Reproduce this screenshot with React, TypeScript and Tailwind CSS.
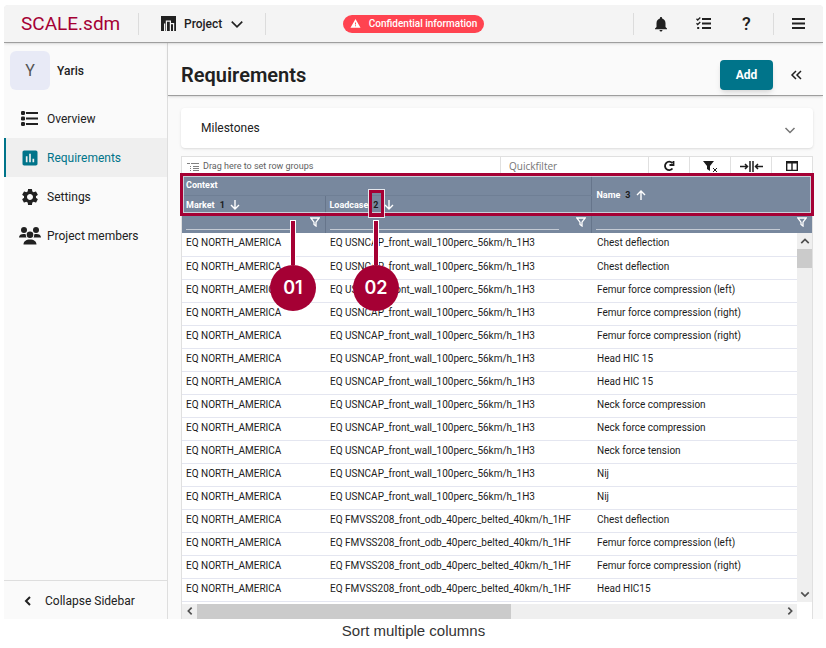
import type { ReactNode } from "react";
import { MdInsertChart, MdNotifications, MdSettings, MdWarning } from "react-icons/md";

const rows: [string, string, string][] = [
  ...[
    "Chest deflection",
    "Chest deflection",
    "Femur force compression (left)",
    "Femur force compression (right)",
    "Femur force compression (right)",
    "Head HIC 15",
    "Head HIC 15",
    "Neck force compression",
    "Neck force compression",
    "Neck force tension",
    "Nij",
    "Nij",
  ].map((n): [string, string, string] => ["EQ NORTH_AMERICA", "EQ USNCAP_front_wall_100perc_56km/h_1H3", n]),
  ...[
    "Chest deflection",
    "Femur force compression (left)",
    "Femur force compression (right)",
    "Head HIC15",
  ].map((n): [string, string, string] => ["EQ NORTH_AMERICA", "EQ FMVSS208_front_odb_40perc_belted_40km/h_1HF", n]),
];

function Stroke({ d, box = 12, className = "", width = 2 }: { d: string; box?: number; className?: string; width?: number }) {
  return (
    <svg viewBox={`0 0 ${box} ${box}`} className={className} fill="none" stroke="currentColor" strokeWidth={width} aria-hidden="true">
      <path d={d} />
    </svg>
  );
}

const ChevronLeft = ({ className }: { className: string }) => <Stroke className={className} d="M8 2 4 6l4 4" />;
const ChevronRight = ({ className }: { className: string }) => <Stroke className={className} d="m4 2 4 4-4 4" />;
const ChevronDown = ({ className, width }: { className: string; width?: number }) => (
  <Stroke className={className} width={width} d="m1.500 4 4.500 4.500L10.500 4" />
);
const ChevronUp = ({ className }: { className: string }) => <Stroke className={className} d="M1.500 8.500 6 4l4.500 4.500" />;

function ProjectIcon() {
  return (
    <svg viewBox="0 0 15 15" className="size-[15px]" aria-hidden="true">
      <path fill="currentColor" d="M0 0h15v15H0z" />
      <path fill="none" stroke="#f4f4f4" strokeWidth="1.200" d="M3.600 15V7.600M5.400 15V5.200h4V15M9.400 7.600h3.200V15" />
    </svg>
  );
}

function ListIcon() {
  return (
    <svg viewBox="0 0 17 15" className="h-[15px] w-[17px]" fill="currentColor" aria-hidden="true">
      <rect width="4" height="4" rx="1.200" />
      <rect y="5.500" width="4" height="4" rx="1.200" />
      <rect y="11" width="4" height="4" rx="1.200" />
      <path d="M5 1h12v2H5zM5 6.500h12v2H5zM5 12h12v2H5z" />
    </svg>
  );
}

function MembersIcon() {
  return (
    <svg viewBox="0 0 22 18" className="h-[18px] w-[22px]" fill="currentColor" aria-hidden="true">
      <circle cx="5" cy="3" r="3" />
      <circle cx="17" cy="3" r="3" />
      <circle cx="11" cy="7.800" r="3.300" />
      <path d="M0 10.500C0 8 2 7 4.500 7c.9 0 1.700.1 2.400.4-.2 1.200 0 2.200.6 3.100zM22 10.500C22 8 20 7 17.500 7c-.9 0-1.700.1-2.400.4.2 1.200 0 2.200-.6 3.100zM4.500 17.500c0-3 2.500-5 6.500-5s6.500 2 6.500 5z" />
    </svg>
  );
}

function ChecklistIcon() {
  return (
    <svg viewBox="0 0 15 13" className="h-[13px] w-[15px]" fill="none" stroke="currentColor" aria-hidden="true">
      <path strokeWidth="2" d="M6 2h9M6 6.500h9M6 11h9" />
      <path strokeWidth="1.300" d="m.5 1.800 1.200 1.200L4.300.5M.5 6.300l1.200 1.200L4.300 5" />
      <path strokeWidth="2" d="M1.200 11h2" />
    </svg>
  );
}

function Funnel() {
  return <Stroke className="size-[10px] shrink-0" box={10} width={1.3} d="M.8 1h8.400L6 5.200V9L4 7.500V5.200z" />;
}

function SortArrow({ up = false }: { up?: boolean }) {
  return <Stroke className="size-[10px]" box={10} width={1.4} d={up ? "M5 10V1M1 5l4-4 4 4" : "M5 0v9M1 5l4 4 4-4"} />;
}

function NavItem({ icon, label, active = false }: { icon: ReactNode; label: string; active?: boolean }) {
  return (
    <a
      href="#"
      aria-current={active ? "page" : undefined}
      className={`flex h-[39px] items-center gap-[5px] border-l-2 pl-[11px] text-xs ${active ? "border-[#00748a] bg-[#efefef] text-[#00748a]" : "border-transparent"}`}
    >
      <span className="flex w-[25px] justify-center">{icon}</span>
      {label}
    </a>
  );
}

function ToolButton({ label, children }: { label: string; children: ReactNode }) {
  return (
    <button aria-label={label} className="flex h-full w-[41px] items-center justify-center border-l border-[#e0e0e0] pt-[2px]">
      {children}
    </button>
  );
}

function SortHead({ label, order, up }: { label: string; order: number; up?: boolean }) {
  return (
    <span className="flex items-center gap-[5px]">
      {label}
      <span className="text-[#1c1c1c]">{order}</span>
      <SortArrow up={up} />
    </span>
  );
}

function FilterCell({ label }: { label: string }) {
  return (
    <div className="flex h-[17px] items-start pr-[5px]">
      <input aria-label={label} className="mr-[17px] h-[14px] min-w-0 flex-1 border-b border-[#c3cad4] bg-transparent outline-none" />
      <span className="pt-px"><Funnel /></span>
    </div>
  );
}

function Callout({ text, className }: { text: string; className: string }) {
  return (
    <div className={`absolute top-[47px] flex w-[46px] flex-col items-center ${className}`}>
      <span className="h-[45px] w-[6px] border border-b-0 border-white bg-[#a50034]" />
      <span className="flex size-[46px] items-center justify-center rounded-full bg-[#a50034] font-[Inter,sans-serif] text-lg font-semibold text-white">
        {text}
      </span>
    </div>
  );
}

function Grid() {
  return (
    <div className="relative">
      <table className="w-full table-fixed border-collapse text-left text-[#1c1c1c]">
        <colgroup>
          <col className="w-[143px]" />
          <col className="w-[266px]" />
          <col />
        </colgroup>
        <thead className="bg-[#78889e] text-[9px] leading-3 text-white">
          <tr className="h-[22px]">
            <th colSpan={2} className="border-b border-[#6f7f95] pt-[2px] pl-1 font-bold">Context</th>
            <th rowSpan={2} className="border-l border-[#66758b] pl-[5px] font-bold">
              <SortHead label="Name" order={3} up />
            </th>
          </tr>
          <tr className="h-[21px]">
            <th className="pb-[2px] pl-1 font-bold"><SortHead label="Market" order={1} /></th>
            <th className="border-l border-[#66758b] pb-[2px] pl-1 font-bold"><SortHead label="Loadcase" order={2} /></th>
          </tr>
          <tr className="h-[17px]">
            <td className="pl-1"><FilterCell label="Filter market" /></td>
            <td className="border-l border-[#66758b] pl-1"><FilterCell label="Filter loadcase" /></td>
            <td className="border-l border-[#66758b] pl-1"><FilterCell label="Filter name" /></td>
          </tr>
        </thead>
        <tbody className="bg-white text-[10px] leading-4">
          {rows.map((r, i) => (
            <tr key={i} className="h-[23px] border-b border-[#e4e6f0]">
              {r.map((c, j) => (
                <td key={j} className={`pb-[2px] whitespace-nowrap ${j === 0 ? "pl-1" : j === 1 ? "pl-[5px]" : "pl-[6px]"}`}>{c}</td>
              ))}
            </tr>
          ))}
        </tbody>
      </table>
      <div className="absolute top-[60px] right-0 bottom-0 flex w-[15px] flex-col items-center bg-[#efefef] text-[#505050]">
        <button aria-label="Scroll up" className="flex h-4 items-center"><ChevronUp className="size-[10px]" /></button>
        <span className="h-[19px] w-full bg-[#cbcbcb]" />
        <button aria-label="Scroll down" className="mt-auto flex h-4 items-center"><ChevronDown className="size-[10px]" /></button>
      </div>
      <div className="absolute -inset-x-[2px] top-0 h-[43px] border-[3px] border-[#a50034] ring-1 ring-white/60 ring-inset" />
      <div className="absolute top-[17px] left-[187px] h-[27px] w-[15px] border-[3px] border-[#a50034] outline outline-white/80" />
      <Callout text="01" className="left-[88px]" />
      <Callout text="02" className="left-[171px]" />
    </div>
  );
}

export default function App() {
  return (
    <figure className="bg-white pt-[5px] pr-[3px] pl-1 font-[Roboto,'Liberation_Sans',sans-serif] text-[#212121]">
      <div className="overflow-hidden rounded-t bg-[#fafafa]">
        <header className="relative z-10 grid h-[38px] grid-cols-[1fr_auto_1fr] items-center border-b border-[#9e9e9e] bg-[#f4f4f4] shadow">
          <div className="flex items-center">
            <span className="w-[134px] pl-[17px] text-[19px] leading-6 text-[#a50034]">SCALE.sdm</span>
            <button className="flex h-[22px] w-[128px] items-center gap-2 border-x border-[#dcdcdc] pl-[22px] text-xs font-medium">
              <ProjectIcon />
              Project
              <ChevronDown className="size-[14px]" width={1.4} />
            </button>
          </div>
          <span className="flex h-[18px] items-center gap-2 rounded-full bg-[#ff4350] px-[7px] text-[10px] font-medium text-white">
            <MdWarning className="size-[11px]" />
            Confidential information
          </span>
          <div className="flex items-center justify-end">
            <span className="flex h-[22px] items-center border-x border-[#dcdcdc] px-[5px]">
              <button aria-label="Notifications" className="flex w-[43px] justify-center"><MdNotifications className="size-[18px]" /></button>
              <button aria-label="Tasks" className="flex w-[43px] justify-center"><ChecklistIcon /></button>
              <button aria-label="Help" className="w-[43px] text-lg leading-5 font-medium">?</button>
            </span>
            <button aria-label="Menu" className="flex w-[49px] justify-center">
              <Stroke className="size-[13px]" box={13} d="M0 2h13M0 6.500h13M0 11h13" />
            </button>
          </div>
        </header>

        <div className="flex">
          <aside className="flex w-[164px] shrink-0 flex-col border-r border-[#dedede]">
            <div className="flex items-center gap-[7px] px-[6px] pt-2 pb-[9px] text-xs font-medium">
              <span className="flex h-[39px] w-10 items-center justify-center rounded-md bg-[#e8eaf6] text-base font-normal text-[#555]">Y</span>
              Yaris
            </div>
            <nav>
              <NavItem icon={<ListIcon />} label="Overview" />
              <NavItem icon={<MdInsertChart className="size-5" />} label="Requirements" active />
              <NavItem icon={<MdSettings className="size-5" />} label="Settings" />
              <NavItem icon={<MembersIcon />} label="Project members" />
            </nav>
            <button className="mt-auto flex h-[39px] items-center gap-[11px] border-t border-[#dedede] pt-[3px] pl-[18px] text-xs">
              <ChevronLeft className="size-3" />
              Collapse Sidebar
            </button>
          </aside>

          <main className="min-w-0 flex-1">
            <div className="flex h-[53px] items-center border-b border-[#9e9e9e] pt-3 pr-[21px] pl-[13px] shadow-sm">
              <h1 className="flex-1 text-xl font-semibold">Requirements</h1>
              <button className="h-[30px] w-[53px] rounded bg-[#00748a] text-xs font-bold text-white shadow-md">Add</button>
              <button aria-label="Collapse panel" className="ml-[17px]">
                <Stroke className="size-3" width={1.5} d="M6 2 2 6l4 4M11 2 7 6l4 4" />
              </button>
            </div>
            <div className="pt-3 pr-[10px] pl-[13px]">
              <button className="flex h-10 w-full items-center justify-between rounded bg-white pr-[17px] pl-5 text-xs shadow">
                Milestones
                <span className="pt-1 text-[#757575]"><ChevronDown className="size-3" width={1.5} /></span>
              </button>
              <div className="mt-2 border border-b-0 border-[#e0e0e0] bg-white">
                <div className="flex h-4 items-center text-[9px] text-[#616161]">
                  <span className="flex flex-1 items-center gap-1 pt-[3px] pl-[5px]">
                    <svg viewBox="0 0 12 10" className="h-[10px] w-3" fill="none" stroke="currentColor" strokeWidth=".8" aria-hidden="true">
                      <path d="M0 1.500h3M4 1.500h8M3 4.500h1M6 4.500h6M3 6.500h1M6 6.500h6M3 8.500h1M6 8.500h6" />
                    </svg>
                    Drag here to set row groups
                  </span>
                  <input
                    aria-label="Quickfilter"
                    placeholder="Quickfilter"
                    className="h-4 w-[148px] border-l border-[#e0e0e0] pt-[2px] pl-2 font-['Open_Sans',sans-serif] text-[10px] outline-none placeholder:text-[#757575]"
                  />
                  <span className="flex h-4 text-[#1c1c1c]">
                    <ToolButton label="Reload">
                      <Stroke className="size-3" width={1.8} d="M9.500 8.500A4.200 4.200 0 1 1 9.200 3M10.500 1v4h-4" />
                    </ToolButton>
                    <ToolButton label="Clear filter">
                      <svg viewBox="0 0 15 13" className="h-[13px] w-[15px]" aria-hidden="true">
                        <path fill="currentColor" d="M0 1h11L7 6v5L4 9V6z" />
                        <path stroke="currentColor" d="m10 8 4 4M14 8l-4 4" />
                      </svg>
                    </ToolButton>
                    <ToolButton label="Fit columns">
                      <svg viewBox="0 0 23 11" className="h-[11px] w-[23px]" fill="none" stroke="currentColor" strokeWidth="1.500" aria-hidden="true">
                        <path d="M0 5.500h7M5 3l2.500 2.500L5 8M23 5.500h-7M18 3l-2.500 2.500L18 8M10 0v11M13 0v11" />
                      </svg>
                    </ToolButton>
                    <ToolButton label="Columns">
                      <svg viewBox="0 0 12 10" className="h-[10px] w-3" fill="none" stroke="currentColor" aria-hidden="true">
                        <path d="M.7.5h10.600v9H.7z" strokeWidth="1.400" />
                        <path d="M0 1.500h12" strokeWidth="2" />
                        <path d="M6 1v9" strokeWidth="1.400" />
                      </svg>
                    </ToolButton>
                  </span>
                </div>
                <Grid />
                <div className="mr-[15px] flex h-[17px] items-center border-t-2 border-white bg-[#efefef] text-[#505050]">
                  <button aria-label="Scroll left" className="flex w-[15px] justify-center"><ChevronLeft className="size-[10px]" /></button>
                  <span className="h-[15px] w-[51%] bg-[#cbcbcb]" />
                  <button aria-label="Scroll right" className="ml-auto flex w-[15px] justify-center"><ChevronRight className="size-[10px]" /></button>
                </div>
              </div>
            </div>
          </main>
        </div>
      </div>
      <figcaption className="pt-[2px] text-center font-['Liberation_Sans',sans-serif] text-[15px] leading-5 text-[#333]">
        Sort multiple columns
      </figcaption>
    </figure>
  );
}
